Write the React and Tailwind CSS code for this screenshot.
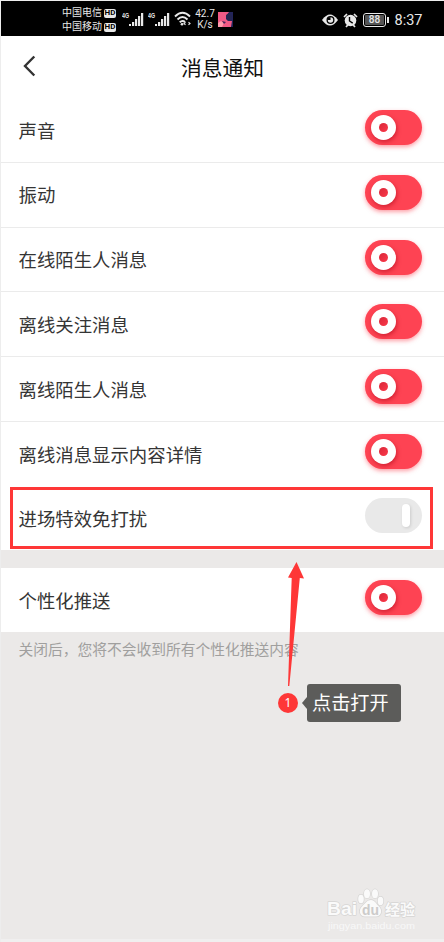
const rows = [
  { label: '声音', h: 'h-[65px]', line: true },
  { label: '振动', h: 'h-[65px]', line: true, raised: true },
  { label: '在线陌生人消息', h: 'h-[64px]', line: true, raised: true },
  { label: '离线关注消息', h: 'h-[65px]', line: true },
  { label: '离线陌生人消息', h: 'h-[65px]', line: true },
  { label: '离线消息显示内容详情', h: 'h-[65px]', line: false },
];

function Toggle({ off }) {
  if (off) {
    return (
      <div className="mt-[11px] flex h-[35px] w-[57px] items-start justify-end rounded-full bg-[#e9e9e9] pr-3 pt-[6px]">
        <div className="h-[23px] w-2 rounded-full bg-white shadow-[1px_1px_3px_rgba(0,0,0,0.12)]" />
      </div>
    );
  }
  return (
    <div className="mt-3 h-[35px] w-[57px] rounded-full bg-[#fe4353] pl-[6px] pt-[5px] shadow-[0_2px_4px_rgba(254,67,83,0.5)]">
      <div className="flex h-[25px] w-[25px] items-center justify-center rounded-full bg-white shadow-[1px_2px_4px_rgba(170,0,20,0.5)]">
        <div className="h-[9px] w-[9px] rounded-full bg-linear-to-br from-[#d92638] to-[#fb3a4b]" />
      </div>
    </div>
  );
}

function Row({ label, h, line, off, raised }) {
  return (
    <div className={`flex items-start justify-between pl-[17.5px] pr-[22px] ${h} ${line ? 'border-b border-[#ebebeb]' : ''}`}>
      <span className={`whitespace-nowrap text-[18.4px] leading-[28px] text-[#353535] ${off || raised ? 'mt-[19px]' : 'mt-5'}`}>{label}</span>
      <Toggle off={off} />
    </div>
  );
}

function Carrier({ name }) {
  return (
    <div className="flex h-[14px] items-center gap-[2px] text-[10px] leading-[14px]">
      <span className="w-10 whitespace-nowrap">{name}</span>
      <span className="flex h-[9px] w-[12px] items-center justify-center rounded-[2px] bg-[#e8e8e8] font-['Roboto'] text-[8px] font-bold leading-none text-black">HD</span>
    </div>
  );
}

function Signal() {
  return (
    <svg width="25" height="18" viewBox="0 0 25 18" fill="#e8e8e8">
      <text x="0" y="8" fontSize="7" fontWeight="700" textLength="7" lengthAdjust="spacingAndGlyphs">4G</text>
      <rect x="7" y="14" width="2" height="2" />
      <rect x="10" y="12" width="2.2" height="4" />
      <rect x="13" y="9" width="2.2" height="7" />
      <rect x="16" y="6" width="2.2" height="10" />
      <rect x="19" y="3" width="2.2" height="13" />
    </svg>
  );
}

function StatusBar() {
  return (
    <div className="flex h-[35px] items-center bg-black pl-[61px] text-[#e8e8e8]">
      <div className="flex w-[60px] flex-col pt-[3px]">
        <Carrier name="中国电信" />
        <Carrier name="中国移动" />
      </div>
      <div className="flex w-[52px] gap-[1px]">
        <Signal />
        <Signal />
      </div>
      <svg className="mt-px" width="18" height="16" viewBox="0 0 18 16" fill="none" stroke="#e8e8e8" strokeWidth="1.9">
        <path d="M1 5.5Q8.5 -2 16 5.5M3.5 8.5Q8.5 3.5 13.5 8.5M5.7 11.2Q8.5 8.7 11 11" />
        <circle cx="8" cy="13.2" r="1.3" fill="#e8e8e8" stroke="none" />
        <path d="M11.5 11.3l-1.5 1.2 1.5 1.2M14.5 11.3l1.5 1.2-1.5 1.2" strokeWidth="1.1" />
      </svg>
      <div className="ml-[2px] w-[22px] text-center font-['Roboto'] text-[10px] leading-[11px]">
        <div>42.7</div>
        <div>K/s</div>
      </div>
      <svg className="ml-[2px] mt-px" width="15" height="15" viewBox="0 0 15 15">
        <rect width="15" height="15" fill="#23255a" />
        <path d="M0 0h11L8 4v3l2 2h4l-1 6H0z" fill="#f05a85" />
        <path d="M0 11l3-2 3 2-2 4H0z" fill="#ff9bac" />
        <path d="M8 3l3-2 3 3-1 5-4-1z" fill="#242650" />
        <path d="M4 9l4 1-2 2z" fill="#45235a" />
      </svg>
      <svg className="ml-[89px] mt-[3px]" width="16" height="12" viewBox="0 0 16 12">
        <path d="M0 6Q8-5 16 6Q8 17 0 6Z" fill="#e8e8e8" />
        <circle cx="8.5" cy="6" r="4" fill="#000" />
        <circle cx="8.5" cy="6" r="2.7" fill="#e8e8e8" />
        <path d="M8.5 6V3a3 3 0 0 0-3 3z" fill="#000" />
      </svg>
      <svg className="ml-[5px] mt-[3px]" width="16" height="15" viewBox="0 0 16 15">
        <circle cx="7.5" cy="7.5" r="5.8" fill="#e8e8e8" />
        <path d="M1 4l3-3M14 4l-3-3M3 14l1.8-2M12 14l-1.8-2" stroke="#e8e8e8" strokeWidth="1.7" />
        <path d="M6.5 4v4l3.2 2.2" fill="none" stroke="#000" strokeWidth="1.4" />
      </svg>
      <div className="ml-[4px] mt-[3px] flex h-[14px] w-[23px] items-center justify-center rounded-[3px] border border-[#e8e8e8] p-px">
        <div className="flex h-full w-full items-center justify-center rounded-[1px] bg-[#555555] font-['Roboto'] text-[10px] font-medium leading-none">88</div>
      </div>
      <div className="ml-px mt-[3px] h-[6px] w-[1.5px] bg-[#e8e8e8]" />
      <span className="ml-[6px] pt-[5px] font-['Roboto'] text-[14.5px] leading-[18px]">8:37</span>
    </div>
  );
}

function Watermark() {
  return (
    <svg className="absolute left-[325px] top-[886px]" width="95" height="46" viewBox="0 0 95 46" fill="#fafafa" stroke="#d6d5d4" strokeWidth="1.4" paintOrder="stroke" strokeLinejoin="round">
      <text x="1" y="28" fontSize="19" fontWeight="700" textLength="30" lengthAdjust="spacingAndGlyphs">Bai</text>
      <ellipse cx="35" cy="12" rx="2.8" ry="4.3" />
      <ellipse cx="41" cy="6.8" rx="3" ry="4.5" />
      <ellipse cx="49" cy="6.8" rx="3" ry="4.5" />
      <ellipse cx="54.5" cy="14" rx="2.8" ry="4.2" />
      <path d="M45 13c4 0 5 4 8 6.5c4 4 2 10-3 10H39c-5 0-7-6-3-10 3-3 5-6.5 9-6.5z" />
      <text x="36" y="27.5" fontSize="14" fontWeight="700" fill="#cccbca" stroke="none" textLength="17" lengthAdjust="spacingAndGlyphs">du</text>
      <text x="59" y="28" fontSize="15" fontWeight="700" textLength="30">经验</text>
      <text x="2" y="42" fontSize="9" fill="#f8f8f8" stroke="none" textLength="87" lengthAdjust="spacingAndGlyphs">jingyan.baidu.com</text>
    </svg>
  );
}

export default function App() {
  return (
    <div className="relative h-[942px] w-[444px] overflow-hidden border-l border-t border-[#ededed] bg-[#ebe9e8] font-['Liberation_Sans','Noto_Sans_CJK_SC',sans-serif]">
      <StatusBar />
      <header className="grid h-[62px] grid-cols-3 items-center bg-white">
        <svg className="ml-[21px] mb-[3px]" width="15" height="22" viewBox="0 0 15 22" fill="none" stroke="#333" strokeWidth="2.4">
          <path d="M12.3 1.5L3 11L12.3 20.5" />
        </svg>
        <h1 className="mt-1 whitespace-nowrap text-center text-[20.8px] leading-[30px] text-[#111]">消息通知</h1>
      </header>
      <main className="bg-white">
        {rows.map((row) => (
          <Row key={row.label} {...row} />
        ))}
        <Row label="进场特效免打扰" h="h-[63px]" off />
      </main>
      <section className="mt-[18px] bg-white">
        <Row label="个性化推送" h="h-[64px]" />
      </section>
      <p className="ml-[17.5px] mt-[7px] whitespace-nowrap text-[14.75px] leading-[22px] text-[#a09f9e]">关闭后，您将不会收到所有个性化推送内容</p>

      <div className="absolute left-[9px] top-[486px] h-[62px] w-[423px] border-[3px] border-[#fe3737]" />
      <svg className="absolute left-[286px] top-[561px]" width="18" height="126" viewBox="0 0 18 126" fill="#fe3737">
        <path d="M9.5 0L17 16.5L12.8 16L2.3 124L1 124L4.7 16L1 15.5Z" />
      </svg>
      <div className="absolute left-[277px] top-[692px] flex items-start">
        <div className="flex h-5 w-5 items-center justify-center rounded-full bg-[#fe3737] font-['Noto_Sans'] text-[12px] leading-none text-white">1</div>
        <div className="ml-1 mt-1 h-0 w-0 border-y-[6px] border-r-[5px] border-y-transparent border-r-[#5c5c5a]" />
        <div className="-mt-[9px] flex h-[38px] w-[94px] items-center rounded-[3px] bg-[#5c5c5a] pl-[5px] pt-[2px] text-[19.2px] text-white">点击打开</div>
      </div>
      <Watermark />
      <div className="absolute inset-x-0 bottom-0 h-[3px] bg-[#f0efef]" />
    </div>
  );
}
